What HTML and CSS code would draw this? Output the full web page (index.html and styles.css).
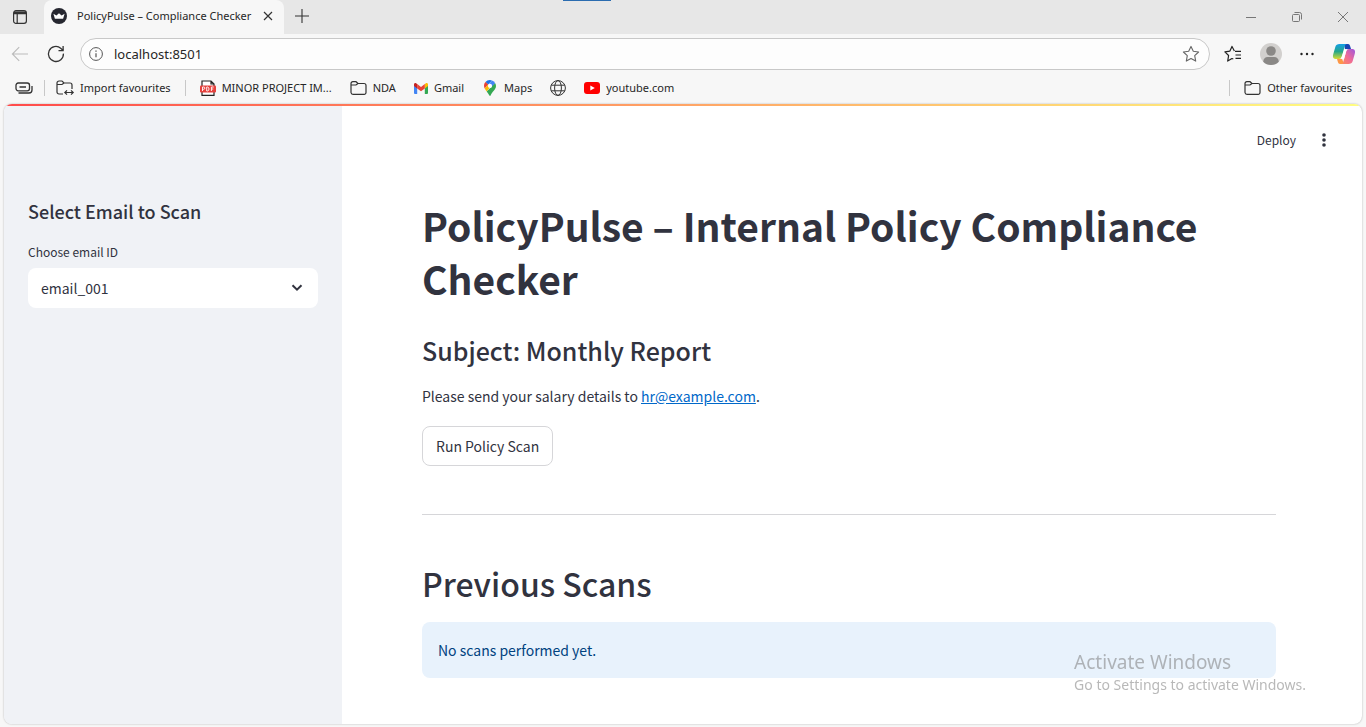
FILE: index.html
```html
<!DOCTYPE html>
<html lang="en">
<head>
<meta charset="utf-8">
<title>PolicyPulse – Compliance Checker</title>
<link rel="stylesheet" href="styles.css">
</head>
<body>
<div class="browser">
  <header class="tabbar">
    <button class="icon-btn tab-actions" aria-label="Tab actions">
      <svg width="16" height="16" viewBox="0 0 16 16" fill="none" stroke="#333" stroke-width="1.2"><rect x="1.6" y="1.6" width="12.8" height="12.8" rx="2.4"/><path d="M2 4.7h12M5.2 5v9.2" /><path d="M2 3.4h12" stroke-width="2"/></svg>
    </button>
    <div class="tab">
      <svg width="16" height="16" viewBox="0 0 16 16"><circle cx="8" cy="8" r="8" fill="#262730"/><path d="M2.400 5.800l3 1.700L8 5.200l2.600 2.300 3-1.700-1.500 4.900H3.900z" fill="#fff"/></svg>
      <span class="tab-title">PolicyPulse – Compliance Checker</span>
      <button class="icon-btn" aria-label="Close tab"><svg width="10" height="10" viewBox="0 0 10 10" stroke="#333" stroke-width="1.2"><path d="M1 1l8 8M9 1L1 9"/></svg></button>
    </div>
    <button class="icon-btn new-tab" aria-label="New tab"><svg width="14" height="14" viewBox="0 0 14 14" stroke="#333" stroke-width="1.1"><path d="M7 0v14M0 7h14"/></svg></button>
    <span class="drag-mark"></span>
    <div class="window-controls">
      <button class="icon-btn" aria-label="Minimise"><svg width="12" height="12" viewBox="0 0 12 12" stroke="#777"><path d="M1 6.5h10"/></svg></button>
      <button class="icon-btn" aria-label="Restore"><svg width="12" height="12" viewBox="0 0 12 12" fill="none" stroke="#777"><rect x="1.5" y="3.5" width="7" height="7" rx="1"/><path d="M3.5 1.5h5.2a2 2 0 0 1 1.8 1.8v5.2"/></svg></button>
      <button class="icon-btn" aria-label="Close"><svg width="12" height="12" viewBox="0 0 12 12" stroke="#777"><path d="M1 1l10 10M11 1L1 11"/></svg></button>
    </div>
  </header>

  <div class="toolbar">
    <button class="icon-btn" aria-label="Back"><svg width="18" height="16" viewBox="0 0 18 16" fill="none" stroke="#bbb" stroke-width="1.1"><path d="M17 8H1.5M8.2 1.2L1.4 8l6.8 6.8"/></svg></button>
    <button class="icon-btn" aria-label="Refresh"><svg width="18" height="18" viewBox="0 0 18 18" fill="none" stroke="#333" stroke-width="1.3"><path d="M16.4 8.6A7.5 7.5 0 1 1 13.7 3.2L16 5.4M16.1 1v4.6h-4.6"/></svg></button>
    <label class="address">
      <svg width="14" height="14" viewBox="0 0 14 14" fill="none" stroke="#555"><circle cx="7" cy="7" r="6.4"/><path d="M7 6.2v4" stroke-width="1.2"/><path d="M7 3.5v1.3" stroke-width="1.3"/></svg>
      <input type="text" value="localhost:8501" aria-label="Address">
      <button class="icon-btn" aria-label="Add to favourites"><svg width="18" height="18" viewBox="0 0 18 18" fill="none" stroke="#666" stroke-width="1.1" stroke-linejoin="round"><path d="M9 1.4l2.3 4.9 5.3.7-3.9 3.7 1 5.4L9 13.5l-4.700 2.600 1-5.400L1.400 7l5.300-.7z"/></svg></button>
    </label>
    <div class="tools">
      <button class="icon-btn" aria-label="Favourites"><svg width="18" height="18" viewBox="0 0 18 18" fill="none" stroke="#222" stroke-width="1.2" stroke-linejoin="round"><path d="M11 6.3H17M11.5 10H17M11.5 13.4H17"/><path d="M10.4 6.1L8 1.4 5.9 6.1.9 6.8l3.7 3.7-.9 5.6L8 13.5l1.3.5"/></svg></button>
      <button class="icon-btn" aria-label="Profile"><svg width="22" height="22" viewBox="0 0 22 22"><circle cx="11" cy="11" r="11" fill="#d2d0ce"/><circle cx="11" cy="8" r="4.8" fill="#8a8886"/><path d="M3.2 18.7c.3-3.2 2-4.7 4.4-4.7h6.8c2.400 0 4.100 1.500 4.400 4.700A11 11 0 0 1 3.200 18.700z" fill="#8a8886"/></svg></button>
      <button class="icon-btn" aria-label="Settings and more"><svg width="14" height="4" viewBox="0 0 14 4" fill="#222"><circle cx="1.500" cy="2" r="1.200"/><circle cx="7" cy="2" r="1.200"/><circle cx="12.500" cy="2" r="1.200"/></svg></button>
      <button class="icon-btn" aria-label="Copilot"><svg width="24" height="22" viewBox="0 0 24 22">
        <defs>
          <linearGradient id="ca" x1="0" y1="0" x2="0" y2="1"><stop offset="0" stop-color="#149fe6"/><stop offset=".5" stop-color="#24a68b"/><stop offset="1" stop-color="#d6dd32"/></linearGradient>
          <linearGradient id="cb" x1="1" y1="0" x2="0" y2="1"><stop offset="0" stop-color="#9c57df"/><stop offset=".5" stop-color="#ee6a9a"/><stop offset="1" stop-color="#ff8e56"/></linearGradient>
        </defs>
        <path d="M12 1h4c1.400 0 1.900 1.300 2.400 3l.7 2.300H13z" fill="#1745b4"/>
        <path d="M7.500 1H15c-1.400 0-2 1.200-2.500 3l-2.500 9c-.6 2-1.500 3-3.300 3H4C1 16 .500 13.800 1.300 11l2-7C4 1.800 5.300 1 7.500 1z" fill="url(#ca)"/>
        <path d="M12 21H8c-1.400 0-1.900-1.200-2.400-3L5 15.700h5z" fill="#fd9746"/>
        <path d="M16.500 21H9c1.400 0 2-1.200 2.500-3l2.500-9c.6-2 1.500-3 3.300-3H20c3 0 3.500 2.200 2.700 5l-2 7c-.7 2.200-2 3-4.200 3z" fill="url(#cb)"/>
        <path d="M12.300 6.300h3.400c-.9.500-1.400 1.500-1.700 2.700l-1.900 6.700H8.500c.8-.5 1.200-1.500 1.500-2.700z" fill="#fff"/></svg></button>
    </div>
  </div>

  <nav class="favourites">
    <button class="icon-btn" aria-label="Workspaces"><svg width="18" height="12" viewBox="0 0 18 12" fill="none" stroke="#333" stroke-width="1.300"><rect x="1" y="1" width="13.500" height="7.800" rx="2.200"/><path d="M4.500 5h6.500M3.500 11h10.500a3 3 0 0 0 3-3V4"/></svg></button>
    <span class="divider divider-tight"></span>
    <a class="fav" href="#"><svg width="18" height="16" viewBox="0 0 18 16" fill="none" stroke="#333" stroke-width="1.200"><path d="M7 14H3a2 2 0 0 1-2-2V3a2 2 0 0 1 2-2h3l2 2h6a2 2 0 0 1 2 2v4M1 4.500h5l2-1.500M9 12.500h8M11 10.300L8.800 12.500l2.200 2.200M15 10.300l2.200 2.200-2.200 2.200"/></svg>Import favourites</a>
    <span class="divider"></span>
    <a class="fav" href="#"><svg width="16" height="16" viewBox="0 0 16 16"><path d="M2 7V1h9l3 3v3M2 12v3.400h12V12M11 1v3h3" fill="#fff" stroke="#222" stroke-width="1.200"/><rect y="5.500" width="16" height="7" rx="1" fill="#e5403c"/><path d="M2.500 11v-4h1.200a1.100 1.100 0 0 1 0 2.300H2.500M6.700 7v4h.8c2 0 2-4 0-4zM11.400 11v-4h2.300M11.400 9h1.900" fill="none" stroke="#fff" stroke-width=".9"/></svg>MINOR PROJECT IM...</a>
    <a class="fav" href="#"><svg width="17" height="14" viewBox="0 0 17 14" fill="none" stroke="#333" stroke-width="1.200"><path d="M1 11.500v-9A1.800 1.800 0 0 1 2.800.7H6L8 2.500h6a2 2 0 0 1 2 2v7a1.800 1.800 0 0 1-2 1.800H3a2 2 0 0 1-2-1.800zM1 4h5l2-1.500"/></svg>NDA</a>
    <a class="fav" href="#"><svg width="14" height="11" viewBox="0 0 14 11"><path d="M0 1.500V10a1 1 0 0 0 1 1h2.200V4.500z" fill="#4285f4"/><path d="M14 1.500V10a1 1 0 0 1-1 1h-2.200V4.500z" fill="#34a853"/><path d="M10.800 1l1.200-.8c.9-.6 2 0 2 1.300V3l-3.200 2.400z" fill="#fbbc04"/><path d="M3.200 1L7 3.900 10.800 1v4.400L7 8.200 3.200 5.400z" fill="#ea4335"/><path d="M0 3V1.500C0 .2 1.100-.4 2 .2l1.200.8v4.400z" fill="#c5221f"/></svg>Gmail</a>
    <a class="fav" href="#"><svg width="16" height="16" viewBox="-2 0 16 16"><path d="M1.400 2.100L4.200 4.500 8 .4A6 6 0 0 0 1.400 2.100z" fill="#1a73e8"/><path d="M8 .4L4.200 4.900 7.800 7.300l3.400-4.100A5.500 5.500 0 0 0 8 .4z" fill="#4285f4"/><path d="M1.400 2.100A6 6 0 0 0 .7 8.500L4.300 4.500z" fill="#ea4335"/><path d="M.7 8.500c.5 1 1.300 1.900 2 2.900l5.100-6.100L4 4.800z" fill="#fbbc04"/><path d="M11.200 3.200L2.700 11.400C4 13 4.800 14.200 5.400 15.600c.2.500 1 .5 1.200 0C8 11.500 11.900 10 12 6a6 6 0 0 0-.8-2.800z" fill="#34a853"/><circle cx="6" cy="5.900" r="2.100" fill="#fff"/></svg>Maps</a>
    <a class="fav" href="#" aria-label="Website"><svg width="16" height="16" viewBox="0 0 16 16" fill="none" stroke="#333"><circle cx="8" cy="8" r="7.400"/><ellipse cx="8" cy="8" rx="3.400" ry="7.400"/><path d="M1.200 5.200h13.600M1.200 10.800h13.600"/></svg></a>
    <a class="fav" href="#"><svg width="16" height="12" viewBox="0 0 16 12"><rect width="16" height="12" rx="3" fill="#f00"/><path d="M6.300 3.400v5.200L10.800 6z" fill="#fff"/></svg>youtube.com</a>
    <div class="other">
      <span class="divider"></span>
      <a class="fav" href="#"><svg width="17" height="14" viewBox="0 0 17 14" fill="none" stroke="#333" stroke-width="1.200"><path d="M1 11.500v-9A1.800 1.800 0 0 1 2.800.7H6L8 2.500h6a2 2 0 0 1 2 2v7a1.800 1.800 0 0 1-2 1.800H3a2 2 0 0 1-2-1.800zM1 4h5l2-1.500"/></svg>Other favourites</a>
    </div>
  </nav>

  <div class="page">
    <div class="decoration"></div>
    <aside class="sidebar">
      <h2 class="side-title">Select Email to Scan</h2>
      <label class="side-label" for="email">Choose email ID</label>
      <div class="select-box">
        <select id="email"><option>email_001</option></select>
        <svg class="chevron" width="12" height="8" viewBox="0 0 12 8" fill="none" stroke="#31333f" stroke-width="2"><path d="M1.500 1.200L6 5.700l4.500-4.500"/></svg>
      </div>
    </aside>
    <main class="main">
      <div class="app-bar">
        <button class="deploy">Deploy</button>
        <button class="icon-btn" aria-label="Menu"><svg width="4" height="14" viewBox="0 0 4 14" fill="#31333f"><circle cx="2" cy="2" r="1.800"/><circle cx="2" cy="7" r="1.800"/><circle cx="2" cy="12" r="1.800"/></svg></button>
      </div>
      <div class="content">
        <h1 class="title">PolicyPulse – Internal Policy Compliance Checker</h1>
        <h3 class="subject">Subject: Monthly Report</h3>
        <p class="message">Please send your salary details to <a href="mailto:hr@example.com">hr@example.com</a>.</p>
        <button class="run">Run Policy Scan</button>
        <hr class="rule">
        <h2 class="previous">Previous Scans</h2>
        <div class="alert">No scans performed yet.</div>
      </div>
    </main>
  </div>
</div>
<div class="watermark">
  <div class="watermark-title">Activate Windows</div>
  <div>Go to Settings to activate Windows.</div>
</div>
</body>
</html>
```
FILE: styles.css
```css
* { box-sizing: border-box; }
body {
  margin: 0;
  background: #f7f7f7;
  color: #262626;
  font: 11px/16px "Noto Sans", "Open Sans", sans-serif;
}
svg { display: block; flex: none; overflow: visible; }
button, input, select { font: inherit; color: inherit; }
.icon-btn {
  display: flex;
  align-items: center;
  justify-content: center;
  flex: none;
  padding: 0;
  border: 0;
  background: none;
}
.browser { display: flex; flex-direction: column; min-height: 100vh; }

.tabbar {
  position: relative;
  display: flex;
  height: 34px;
  background: #e7e7e7;
}
.tab-actions { width: 44px; padding-right: 4px; }
.tab {
  display: flex;
  align-items: center;
  width: 240px;
  padding: 0 11px 2px 7px;
  gap: 10px;
  background: #f7f7f7;
  border-radius: 8px 8px 0 0;
}
.tab-title { flex: 1; min-width: 0; white-space: nowrap; }
.new-tab { width: 36px; padding-bottom: 3px; }
.drag-mark {
  position: absolute;
  top: 0;
  left: 563px;
  width: 48px;
  height: 1px;
  background: #2b6cb0;
}
.window-controls { display: flex; margin-left: auto; }
.window-controls .icon-btn { width: 46px; }

.toolbar {
  display: flex;
  align-items: center;
  height: 40px;
  padding: 0 10px 0 11px;
  gap: 18px;
}
.address {
  display: flex;
  flex: 1;
  align-items: center;
  height: 32px;
  margin-left: -3px;
  padding: 0 9px 0 8px;
  gap: 11px;
  border: 1px solid #c8c8c8;
  border-radius: 16px;
  background: #fdfdfd;
}
.address input {
  flex: 1;
  min-width: 0;
  padding: 0;
  border: 0;
  outline: 0;
  background: none;
  font-size: 13px;
}
.tools { display: flex; align-items: center; gap: 18px; margin-left: -4px; }

.favourites {
  display: flex;
  align-items: center;
  height: 28px;
  padding: 0 14px 0 15px;
  gap: 18px;
}
.divider { width: 1px; height: 16px; margin: 0 -4px; background: #c8c8c8; }
.divider-tight { margin: 0 -7px; }
.fav {
  display: flex;
  align-items: center;
  gap: 6px;
  color: inherit;
  text-decoration: none;
  white-space: nowrap;
}
.other { display: flex; gap: 18px; margin-left: auto; }

.page {
  position: relative;
  display: flex;
  flex: 1;
  margin: 2px 4px 3px;
  overflow: hidden;
  border-radius: 8px;
  background: #fff;
  box-shadow: 0 0 2px #aaa;
  color: #31333f;
  font: 14px/24px "Noto Sans CJK SC", "Noto Sans", sans-serif;
}
.decoration {
  position: absolute;
  inset: 0 0 auto;
  height: 2px;
  background: linear-gradient(90deg, #ff4b4b, #fffd80);
}
.sidebar { width: 338px; flex: none; padding: 95px 24px 24px; background: #f0f2f6; }
.side-title { margin: 0; font-size: 18px; line-height: 24px; font-weight: 500; }
.side-label { display: block; margin-top: 19px; font-size: 12px; line-height: 20px; }
.select-box { position: relative; margin-top: 6px; }
.select-box select {
  display: block;
  width: 100%;
  height: 40px;
  padding: 0 13px;
  border: 0;
  border-radius: 8px;
  background: #fff;
  appearance: none;
}
.chevron { position: absolute; top: 16px; right: 15px; pointer-events: none; }
.main { flex: 1; min-width: 0; }
.app-bar {
  display: flex;
  align-items: center;
  justify-content: flex-end;
  height: 60px;
  padding: 12px 36px 0 0;
  gap: 26px;
}
.deploy { padding: 0; border: 0; background: none; font-size: 12px; }
.content { padding: 35px 86px 46px 80px; }
.title { margin: 0; font-size: 39px; line-height: 53px; font-weight: 700; }
.subject { margin: 28px 0 0; font-size: 25px; line-height: 34px; font-weight: 500; }
.message { margin: 17px 0 0; }
.message a { color: #0068c9; }
.run {
  display: block;
  height: 40px;
  margin-top: 18px;
  padding: 0 13px;
  border: 1px solid #d6d6d9;
  border-radius: 8px;
  background: #fff;
}
.rule { height: 1px; margin: 48px 0 0; border: 0; background: #d6d6d9; }
.previous { margin: 46px 0 0; font-size: 32px; line-height: 44px; font-weight: 500; }
.alert {
  margin-top: 17px;
  padding: 16px;
  border-radius: 8px;
  background: #e8f2fc;
  color: #004280;
}
.watermark {
  position: fixed;
  right: 60px;
  bottom: 34px;
  color: rgba(125, 125, 125, .55);
  font: 14px/17px "Noto Sans", sans-serif;
  pointer-events: none;
}
.watermark-title { font-size: 19px; line-height: 28px; }
```
